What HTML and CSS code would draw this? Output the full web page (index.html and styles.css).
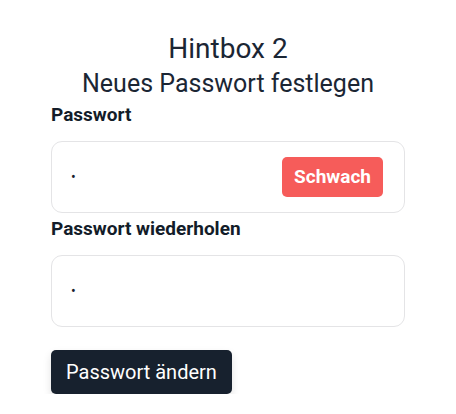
FILE: index.html
```html
<!DOCTYPE html>
<html lang="de">
<head>
<meta charset="utf-8">
<title>Hintbox 2</title>
<link rel="stylesheet" href="styles.css">
</head>
<body>
<main class="page">
  <h1 class="title">Hintbox 2</h1>
  <h2 class="subtitle">Neues Passwort festlegen</h2>
  <form class="form">
    <div class="field">
      <label class="label" for="pw1">Passwort</label>
      <div class="input-box">
        <input class="input" id="pw1" type="password" value="a" readonly>
        <span class="badge">Schwach</span>
      </div>
    </div>
    <div class="field field-second">
      <label class="label" for="pw2">Passwort wiederholen</label>
      <div class="input-box">
        <input class="input" id="pw2" type="password" value="a" readonly>
      </div>
    </div>
    <button class="submit" type="button">Passwort ändern</button>
  </form>
</main>
</body>
</html>
```

FILE: styles.css
```css
* { box-sizing: border-box; }

body {
  margin: 0;
  background: #ffffff;
  font-family: Roboto, "Liberation Sans", sans-serif;
  color: #17212e;
}

.page {
  width: 354px;
  margin: 0 auto;
  padding-top: 31px;
}

.title,
.subtitle {
  margin: 0;
  font-weight: 400;
  text-align: center;
  color: #1b2634;
}

.title {
  font-size: 28px;
  line-height: 36px;
}

.subtitle {
  font-size: 25px;
  line-height: 34px;
}

.form {
  display: flex;
  flex-direction: column;
  align-items: flex-start;
  margin-top: 2px;
}

.field {
  width: 100%;
  display: flex;
  flex-direction: column;
  gap: 14px;
}

.field-second {
  margin-top: 4px;
}

.label {
  font-size: 19px;
  line-height: 24px;
  font-weight: 700;
  color: #131c29;
}

.input-box {
  height: 72px;
  border: 1px solid #e4e4e6;
  border-radius: 11px;
  display: flex;
  align-items: center;
  padding: 0 21px 0 19px;
  gap: 12px;
}

.input {
  flex: 1;
  min-width: 0;
  border: 0;
  outline: none;
  background: transparent;
  font-family: Roboto, "Liberation Sans", sans-serif;
  font-size: 14px;
  color: #17212e;
  padding: 0;
}

.badge {
  background: #f65c5a;
  color: #ffffff;
  font-size: 19px;
  line-height: 24px;
  font-weight: 700;
  padding: 8px 12px;
  border-radius: 5px;
}

.submit {
  margin-top: 23px;
  height: 44px;
  padding: 0 15px;
  border: 0;
  border-radius: 5px;
  background: #17212e;
  color: #ffffff;
  font-family: Roboto, "Liberation Sans", sans-serif;
  font-size: 20px;
  line-height: 24px;
  font-weight: 400;
  box-shadow: 0 4px 8px rgba(0, 0, 0, 0.12);
  cursor: pointer;
}
```
